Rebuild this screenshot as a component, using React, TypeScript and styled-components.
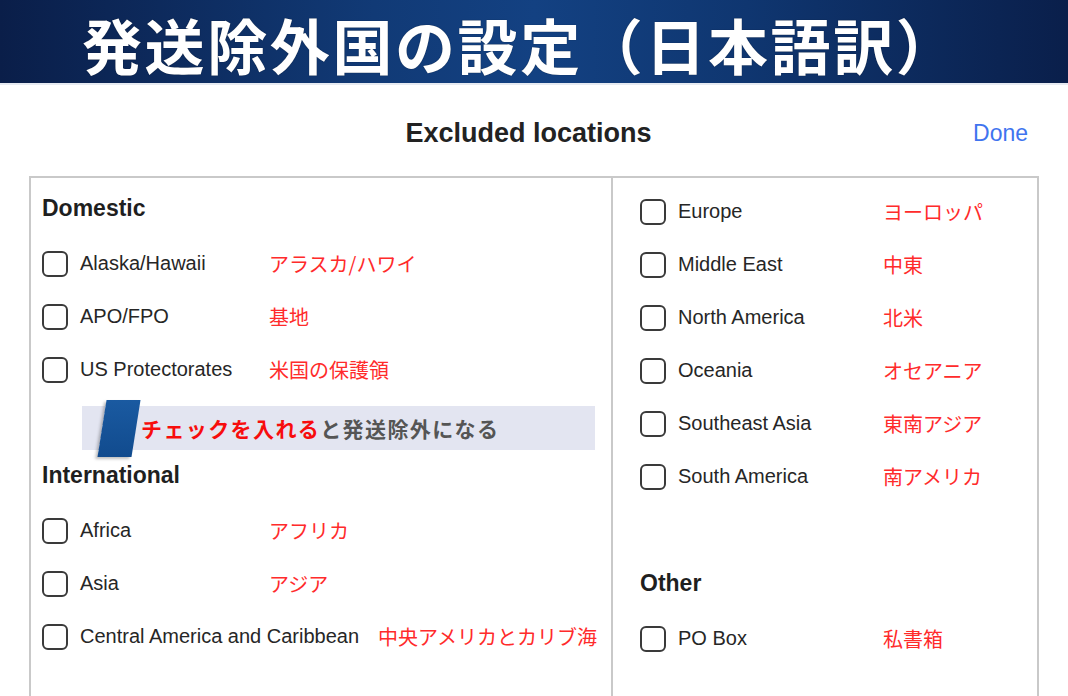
import React from "react";
import styled, { createGlobalStyle } from "styled-components";

const Global = createGlobalStyle`
  html, body { margin: 0; padding: 0; background: #ffffff; overflow: hidden; }
  body { font-family: "Liberation Sans", Arial, "Noto Sans CJK JP", sans-serif; }
  * { box-sizing: border-box; }
`;

const Page = styled.div`
  width: 1068px;
  height: 696px;
  overflow: hidden;
  display: flex;
  flex-direction: column;
`;

const Banner = styled.header`
  height: 85px;
  flex: none;
  display: flex;
  align-items: center;
  padding-left: 82px;
  background: linear-gradient(90deg, #0a1e49 0%, #113a76 35%, #134182 50%, #0f3670 70%, #0a1f4b 100%);
  border-bottom: 2px solid #e6eaf1;
`;

const BannerTitle = styled.h1`
  margin: 0;
  font-family: "Noto Sans CJK JP", sans-serif;
  font-weight: 700;
  font-size: 60px;
  line-height: 1;
  color: #ffffff;
  letter-spacing: 2.6px;
  text-shadow: 0 0 1px rgba(0, 0, 0, 0.6);
  transform: translateY(2px);
`;

const TitleRow = styled.div`
  flex: none;
  height: 86px;
  margin-top: 5px;
  display: grid;
  grid-template-columns: 1fr auto 1fr;
  align-items: center;
  padding: 0 40px 0 29px;
`;

const DialogTitle = styled.h2`
  grid-column: 2;
  margin: 0;
  font-size: 27px;
  font-weight: 700;
  color: #222222;
`;

const DoneButton = styled.button`
  grid-column: 3;
  justify-self: end;
  border: none;
  background: none;
  padding: 0;
  font-family: "Liberation Sans", Arial, sans-serif;
  font-size: 23px;
  color: #3f74ef;
  cursor: pointer;
`;

const Panel = styled.div`
  margin-left: 29px;
  width: 1010px;
  height: 560px;
  flex: none;
  border: 2px solid #c9c9c9;
  display: grid;
  grid-template-columns: 580px 1fr;
`;

const Column = styled.div<{ $divider?: boolean; $padLeft: number; $padTop: number }>`
  display: flex;
  flex-direction: column;
  padding-left: ${(p) => p.$padLeft}px;
  padding-top: ${(p) => p.$padTop}px;
  border-left: ${(p) => (p.$divider ? "2px solid #c9c9c9" : "none")};
`;

const SectionTitle = styled.h3<{ $top?: number }>`
  margin: ${(p) => p.$top ?? 0}px 0 7px 0;
  height: 44px;
  line-height: 44px;
  font-size: 23px;
  font-weight: 700;
  color: #1f1f1f;
`;

const Row = styled.label`
  height: 53px;
  display: flex;
  align-items: center;
`;

const Box = styled.span`
  width: 26px;
  height: 26px;
  flex: none;
  border: 2px solid #3a3a3a;
  border-radius: 6px;
  margin-right: 12px;
`;

const Label = styled.span<{ $min: number }>`
  min-width: ${(p) => p.$min}px;
  margin-right: 19px;
  font-size: 20px;
  color: #262626;
  white-space: nowrap;
`;

const Jp = styled.span`
  font-family: "Noto Sans CJK JP", sans-serif;
  font-size: 20px;
  color: #ff2b2b;
  white-space: nowrap;
`;

const NoteWrap = styled.div`
  height: 57px;
  padding-top: 10px;
  margin-left: 40px;
  margin-right: 16px;
`;

const NoteBand = styled.div`
  height: 44px;
  display: flex;
  align-items: center;
  background: #e3e5f1;
`;

const NoteTag = styled.span`
  width: 34px;
  height: 57px;
  margin-left: 20px;
  margin-right: 5px;
  flex: none;
  transform: skewX(-9deg);
  background: linear-gradient(180deg, #1a5aa1 0%, #114b8e 100%);
  box-shadow: -2px 2px 3px rgba(0, 0, 0, 0.25);
`;

const NoteText = styled.span<{ $accent?: boolean }>`
  font-family: "Noto Sans CJK JP", sans-serif;
  font-weight: 700;
  font-size: 21px;
  letter-spacing: 1.4px;
  color: ${(p) => (p.$accent ? "#f70d0d" : "#555555")};
`;

type Item = { en: string; jp: string };

const domestic: Item[] = [
  { en: "Alaska/Hawaii", jp: "アラスカ/ハワイ" },
  { en: "APO/FPO", jp: "基地" },
  { en: "US Protectorates", jp: "米国の保護領" },
];

const international: Item[] = [
  { en: "Africa", jp: "アフリカ" },
  { en: "Asia", jp: "アジア" },
  { en: "Central America and Caribbean", jp: "中央アメリカとカリブ海" },
];

const regions: Item[] = [
  { en: "Europe", jp: "ヨーロッパ" },
  { en: "Middle East", jp: "中東" },
  { en: "North America", jp: "北米" },
  { en: "Oceania", jp: "オセアニア" },
  { en: "Southeast Asia", jp: "東南アジア" },
  { en: "South America", jp: "南アメリカ" },
];

const Rows = ({ items, min }: { items: Item[]; min: number }) => (
  <>
    {items.map((it) => (
      <Row key={it.en}>
        <Box />
        <Label $min={min}>{it.en}</Label>
        <Jp>{it.jp}</Jp>
      </Row>
    ))}
  </>
);

export default function App() {
  return (
    <Page>
      <Global />
      <Banner>
        <BannerTitle>発送除外国の設定（日本語訳）</BannerTitle>
      </Banner>
      <TitleRow>
        <DialogTitle>Excluded locations</DialogTitle>
        <DoneButton>Done</DoneButton>
      </TitleRow>
      <Panel>
        <Column $padLeft={11} $padTop={0}>
          <SectionTitle $top={8}>Domestic</SectionTitle>
          <Rows items={domestic} min={170} />
          <NoteWrap>
            <NoteBand>
              <NoteTag />
              <NoteText $accent>チェックを入れる</NoteText>
              <NoteText>と発送除外になる</NoteText>
            </NoteBand>
          </NoteWrap>
          <SectionTitle>International</SectionTitle>
          <Rows items={international} min={170} />
        </Column>
        <Column $divider $padLeft={27} $padTop={7}>
          <Rows items={regions} min={186} />
          <SectionTitle $top={58}>Other</SectionTitle>
          <Rows items={[{ en: "PO Box", jp: "私書箱" }]} min={186} />
        </Column>
      </Panel>
    </Page>
  );
}
